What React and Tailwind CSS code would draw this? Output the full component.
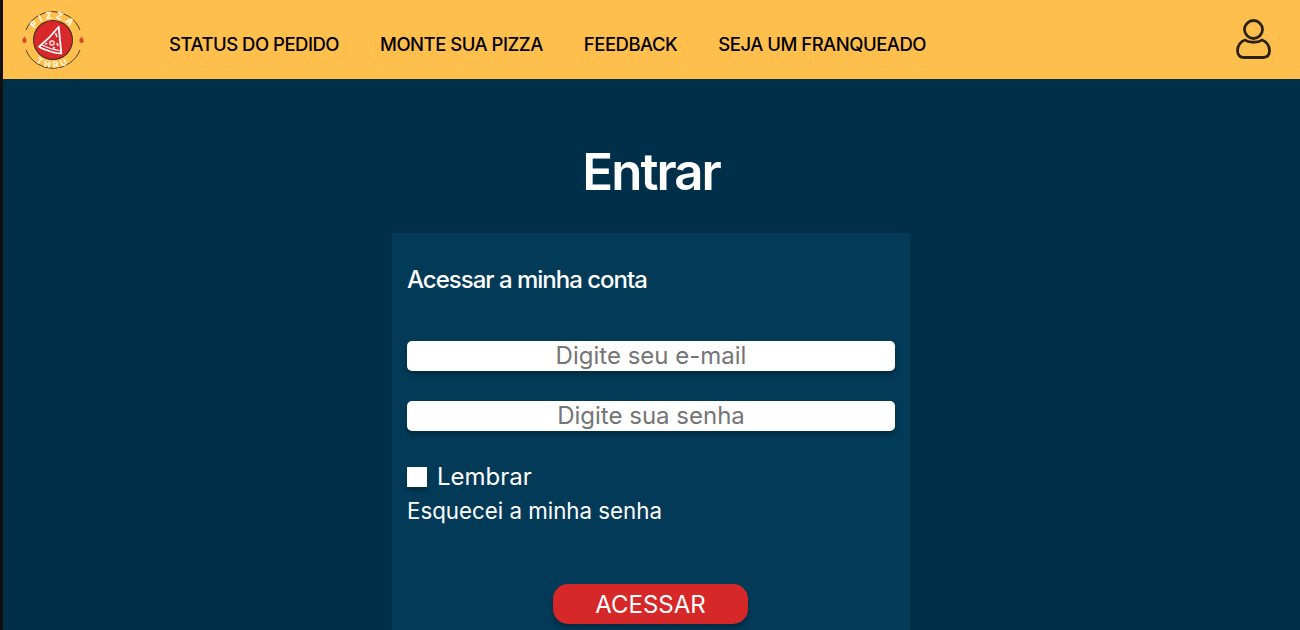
function Flame({ x }) {
  return (
    <path
      d={`M${x} 27.500c1.200 1.800 2.200 2.800 2.200 4.200a2.200 2.200 0 0 1-4.400 0c0-1.400 1-2.400 2.200-4.200z`}
      fill="#d9482b"
    />
  )
}

function Logo() {
  return (
    <svg width="62" height="62" viewBox="0 0 62 62" className="shrink-0">
      <defs>
        <path id="logoTop" d="M9.500 31a21.500 21.500 0 0 1 43 0" />
        <path id="logoBottom" d="M3 31a28 28 0 0 0 56 0" />
      </defs>
      <path d="M4 21a29 29 0 0 1 54 0" fill="none" stroke="#4a3a1a" strokeWidth="1" />
      <path d="M4 41a29 29 0 0 0 54 0" fill="none" stroke="#4a3a1a" strokeWidth="1" />
      <text fontFamily="Inter, sans-serif" fontSize="9.500" fontWeight="800" fill="#fff6e0" letterSpacing="3">
        <textPath href="#logoTop" startOffset="50%" textAnchor="middle">PIZZA</textPath>
      </text>
      <text fontFamily="Inter, sans-serif" fontSize="9" fontWeight="800" fill="#fff1d0" letterSpacing="3">
        <textPath href="#logoBottom" startOffset="50%" textAnchor="middle">THRU</textPath>
      </text>
      <circle cx="31" cy="31" r="20" fill="#3a2a18" />
      <circle cx="31" cy="31" r="19" fill="#d8282c" />
      <path
        d="M36.700 17.700 C37.500 26 38.500 36 39.300 44.300 C35 45 31 43.500 27 42 C23 40.500 19.500 40 17 37.700 C24 32 31 25 36.700 17.700 Z"
        fill="none"
        stroke="#fff"
        strokeWidth="1.800"
        strokeLinejoin="round"
      />
      <path d="M19 35.500 C25 38.500 31 41 38 41.500" fill="none" stroke="#fff" strokeWidth="1.200" />
      <circle cx="30" cy="34" r="2.200" fill="none" stroke="#fff" strokeWidth="1.200" />
      <path d="M33.500 24l1.500 4M25 34l-1.500 1.500M35 34l1 3M31 38.500l2 .5" stroke="#fff" strokeWidth="1.500" fill="none" />
      <Flame x={2.500} />
      <Flame x={59.500} />
    </svg>
  )
}

function UserIcon() {
  return (
    <svg width="35" height="40" viewBox="0 0 35 40" fill="none" stroke="#2a2118" strokeWidth="2.800" className="mb-[2px]">
      <circle cx="17.500" cy="10.500" r="9" />
      <path
        d="M9 21 C13 24 22 24 26 21 C30 22 33.500 26.500 33.500 31.500 C33.500 36 31 38.500 27 38.500 H8 C4 38.500 1.500 36 1.500 31.500 C1.500 26.500 5 22 9 21 Z"
        strokeLinejoin="round"
      />
    </svg>
  )
}

function App() {
  return (
    <div className="h-[630px] overflow-hidden bg-[#111] pl-[3px] font-['Inter',sans-serif]">
      <header className="flex h-[79px] items-center justify-between bg-[#ffbf4d] pl-[19px] pr-[29px]">
        <div className="flex items-center gap-[85px]">
          <Logo />
          <nav className="mt-[10px] flex gap-[41px] text-[18.500px] font-medium tracking-[-0.5px] text-black">
            <a>STATUS DO PEDIDO</a>
            <a>MONTE SUA PIZZA</a>
            <a>FEEDBACK</a>
            <a>SEJA UM FRANQUEADO</a>
          </nav>
        </div>
        <UserIcon />
      </header>

      <main className="flex h-[551px] flex-col items-center bg-[#003049] pr-px">
        <h1 className="mt-[62px] text-[51px] leading-[62px] font-semibold tracking-[-2px] text-white">Entrar</h1>
        <div className="mt-[30px] flex w-[518px] flex-1 flex-col bg-[#023a58] px-[15px] pt-[32px]">
          <h2 className="text-[24px] leading-[30px] font-medium tracking-[-1px] text-white">Acessar a minha conta</h2>
          <input
            type="text"
            placeholder="Digite seu e-mail"
            className="mt-[46px] h-[30px] rounded-[5px] bg-white text-center text-[24px] shadow-[0_4px_4px_rgba(0,0,0,0.25)] placeholder:text-[#757575]"
          />
          <input
            type="password"
            placeholder="Digite sua senha"
            className="mt-[30px] h-[30px] rounded-[5px] bg-white text-center text-[24px] shadow-[0_4px_4px_rgba(0,0,0,0.25)] placeholder:text-[#757575]"
          />
          <label className="mt-[31px] flex h-[30px] items-center gap-[10px] text-[24px] text-white">
            <span className="h-5 w-5 bg-white shadow-[0_4px_4px_rgba(0,0,0,0.25)]" />
            Lembrar
          </label>
          <a className="mt-[4px] text-[22.300px] leading-[30px] text-white">Esquecei a minha senha</a>
          <button className="ml-[146px] mt-[58px] h-10 w-[195px] rounded-[15px] bg-[#d62828] pt-px text-[24px] text-white shadow-[0_4px_4px_rgba(0,0,0,0.25)]">
            ACESSAR
          </button>
        </div>
      </main>
    </div>
  )
}

export default App
